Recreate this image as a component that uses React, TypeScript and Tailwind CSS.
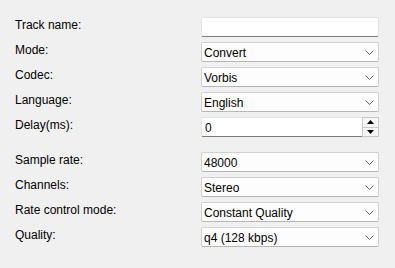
import React from "react";

const Chevron = () => (
  <svg width="9" height="5" viewBox="0 0 9 5" className="shrink-0">
    <path d="M0.5 0.5 L4.5 4.5 L8.5 0.5" fill="none" stroke="#606060" strokeWidth="1" />
  </svg>
);

const Combo = ({ value }: { value: string }) => (
  <div className="flex items-center justify-between w-[178px] h-[20px] bg-[#fdfdfd] border border-[#d0d0d0] border-b-[#b6b6b6] rounded-[2px] pl-[2px] pr-[4px] text-[#000]">
    <span className="leading-none pt-[1px]">{value}</span>
    <Chevron />
  </div>
);

const Label = ({ children }: { children: React.ReactNode }) => (
  <div className="w-[186px] pb-[4px] leading-none text-[#000]">{children}</div>
);

const Row = ({ label, children, extra }: { label: string; children: React.ReactNode; extra?: boolean }) => (
  <div className={`flex items-center h-[20px] ${extra ? "mb-[15px]" : "mb-[5px]"}`}>
    <Label>{label}</Label>
    {children}
  </div>
);

export default function App() {
  return (
    <div
      className="w-[395px] h-[268px] bg-[#f0f0f0] pt-[17px] pl-[15px] text-[12px]"
      style={{ fontFamily: '"Liberation Sans", Arial, sans-serif' }}
    >
      <Row label="Track name:">
        <div className="w-[178px] h-[20px] bg-white border border-[#e3e3e3] border-b-[#7a7a7a] rounded-[2px]" />
      </Row>
      <Row label="Mode:">
        <Combo value="Convert" />
      </Row>
      <Row label="Codec:">
        <Combo value="Vorbis" />
      </Row>
      <Row label="Language:">
        <Combo value="English" />
      </Row>
      <Row label="Delay(ms):" extra>
        <div className="flex items-stretch w-[178px] h-[20px] bg-white border border-[#e3e3e3] border-b-[#7a7a7a] rounded-[2px]">
          <div className="flex-1 flex items-center pl-[3px] pt-[1px] leading-none">0</div>
          <div className="flex flex-col w-[17px] border border-[#c8c8c8] my-[-1px] mr-[-1px]">
            <div className="flex-1 flex items-center justify-center bg-[#f6f6f6] border-b border-[#c8c8c8]">
              <svg width="7" height="4" viewBox="0 0 7 4"><path d="M3.5 0 L7 4 L0 4 Z" fill="#000" /></svg>
            </div>
            <div className="flex-1 flex items-center justify-center bg-[#f6f6f6]">
              <svg width="7" height="4" viewBox="0 0 7 4"><path d="M0 0 L7 0 L3.5 4 Z" fill="#000" /></svg>
            </div>
          </div>
        </div>
      </Row>
      <Row label="Sample rate:">
        <Combo value="48000" />
      </Row>
      <Row label="Channels:">
        <Combo value="Stereo" />
      </Row>
      <Row label="Rate control mode:">
        <Combo value="Constant Quality" />
      </Row>
      <Row label="Quality:">
        <Combo value="q4 (128 kbps)" />
      </Row>
    </div>
  );
}
